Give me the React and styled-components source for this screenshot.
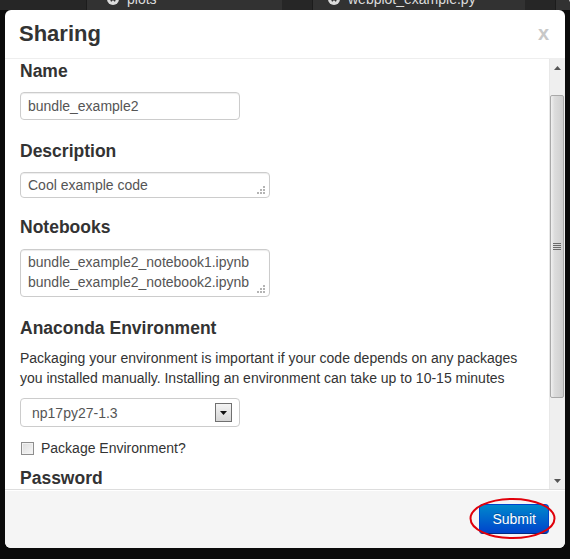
import React from 'react';
import styled, { createGlobalStyle } from 'styled-components';

const GlobalStyle = createGlobalStyle`
  *, *::before, *::after { box-sizing: border-box; }
  html, body { margin: 0; padding: 0; }
  body {
    width: 570px;
    height: 559px;
    overflow: hidden;
    background: #0b0b0b;
    font-family: 'Liberation Sans', Arial, sans-serif;
    color: #333;
  }
`;

const Screen = styled.div`
  width: 570px;
  height: 559px;
  display: flex;
  flex-direction: column;
  background: #0b0b0b;
`;

/* editor tabs peeking out behind the dialog */
const TabStrip = styled.div`
  height: 10px;
  flex-shrink: 0;
  display: flex;
  gap: ${p => p.$gap || 0}px;
  padding-left: 86px;
  background: #262626;
  overflow: hidden;
`;

const Tab = styled.div`
  width: ${p => p.$w}px;
  flex-shrink: 0;
  padding-left: ${p => p.$pad}px;
  background: #323232;
  border-left: 1px solid #1c1c1c;
  color: #dcdcdc;
  font-size: 14px;
  line-height: 20px;
`;

const TabLabel = styled.div`
  display: flex;
  align-items: center;
  gap: 8px;
  margin-top: -11px;
  white-space: nowrap;
`;

const Stage = styled.div`
  display: flex;
  padding-left: 5px;
`;

const Modal = styled.div`
  width: 560px;
  height: 538px;
  display: flex;
  flex-direction: column;
  background: #fff;
  border-radius: 6px;
  overflow: hidden;
`;

const Header = styled.div`
  height: 49px;
  flex-shrink: 0;
  display: flex;
  align-items: center;
  justify-content: space-between;
  padding: 0 16px 0 14px;
  border-bottom: 1px solid #eee;
`;

const Title = styled.h3`
  margin: 0;
  font-size: 22px;
  line-height: 30px;
  font-weight: 700;
  color: #333;
`;

const Close = styled.span`
  font-size: 20px;
  font-weight: 700;
  line-height: 20px;
  color: #c8c8c8;
  margin-top: -2px;
`;

const BodyRow = styled.div`
  height: 430px;
  flex-shrink: 0;
  display: flex;
`;

const Body = styled.div`
  flex: 1;
  overflow: hidden;
  padding: 2px 15px 0;
`;

const Heading = styled.h4`
  margin: ${p => p.$mt || 0}px 0 0;
  font-size: 17.5px;
  line-height: 20px;
  font-weight: 700;
  color: #333;
`;

const TextInput = styled.input`
  display: block;
  margin-top: 11px;
  width: 220px;
  height: 28px;
  padding: 0 7px;
  border: 1px solid #ccc;
  border-radius: 4px;
  box-shadow: inset 0 1px 1px rgba(0, 0, 0, 0.075);
  font-family: 'Liberation Sans', Arial, sans-serif;
  font-size: 14px;
  color: #555;
  outline: none;
`;

const AreaWrap = styled.div`
  position: relative;
  width: 250px;
  margin-top: ${p => p.$mt}px;
`;

const TextArea = styled.textarea`
  display: block;
  width: 250px;
  height: ${p => p.$h}px;
  padding: 2px 7px;
  border: 1px solid #ccc;
  border-radius: 4px;
  box-shadow: inset 0 1px 1px rgba(0, 0, 0, 0.075);
  font-family: 'Liberation Sans', Arial, sans-serif;
  font-size: 14px;
  line-height: 20px;
  color: #555;
  resize: none;
  overflow: hidden;
  white-space: pre;
  outline: none;
`;

const Grip = styled.svg`
  position: absolute;
  right: 5px;
  bottom: 4px;
`;

const Para = styled.p`
  margin: 10px 0 0;
  max-width: 500px;
  font-size: 14px;
  line-height: 20px;
  color: #333;
`;

const SelectBox = styled.div`
  margin-top: 10px;
  width: 220px;
  height: 29px;
  display: flex;
  align-items: center;
  justify-content: space-between;
  padding: 0 7px 0 11px;
  border: 1px solid #ccc;
  border-radius: 4px;
  font-size: 14px;
  color: #555;
`;

const DropBtn = styled.span`
  width: 17px;
  height: 19px;
  display: flex;
  align-items: center;
  justify-content: center;
  border: 1px solid #707070;
  background: linear-gradient(#f4f4f4, #d6d6d6);
`;

const CheckRow = styled.label`
  margin-top: 11px;
  display: flex;
  align-items: center;
  gap: 7px;
  height: 20px;
  padding-left: 1px;
  font-size: 14px;
  line-height: 20px;
  color: #333;
`;

const CheckBox = styled.span`
  width: 13px;
  height: 13px;
  margin-top: 1px;
  border: 1px solid #8e8e8e;
  background: linear-gradient(135deg, #dcdcdc, #f7f7f7);
  box-shadow: inset 0 0 0 1px #f2f2f2;
`;

const ScrollBar = styled.div`
  width: 16px;
  flex-shrink: 0;
  display: flex;
  flex-direction: column;
  background: #efefef;
  border-left: 1px solid #e8e8e8;
`;

const ScrollArrow = styled.div`
  height: 17px;
  display: flex;
  align-items: center;
  justify-content: center;
`;

const ScrollGap = styled.div`
  height: ${p => p.$h}px;
  flex-shrink: 0;
`;

const Thumb = styled.div`
  height: 303px;
  margin: 0 1px 0 0;
  display: flex;
  align-items: center;
  justify-content: center;
  border: 1px solid #a9a9a9;
  border-radius: 2px;
  background: linear-gradient(90deg, #f0f0f0 0%, #dcdcdc 30%, #cfcfcf 100%);
`;

const Footer = styled.div`
  height: 59px;
  flex-shrink: 0;
  display: flex;
  justify-content: flex-end;
  padding: 14px 16px;
  background: #f5f5f5;
  border-top: 1px solid #ddd;
  box-shadow: inset 0 1px 0 #fff;
`;

const Marked = styled.div`
  position: relative;
`;

const Ring = styled.svg`
  position: absolute;
  left: -10px;
  top: -6px;
  pointer-events: none;
`;

const PrimaryBtn = styled.button`
  height: 30px;
  padding: 4px 12px;
  border: 1px solid #0044cc;
  border-bottom-color: #002a80;
  border-radius: 4px;
  background: linear-gradient(#0088cc, #0044cc);
  color: #fff;
  font-family: 'Liberation Sans', Arial, sans-serif;
  font-size: 14px;
  line-height: 20px;
  text-shadow: 0 -1px 0 rgba(0, 0, 0, 0.25);
`;

function CloseCircle() {
  return (
    <svg width="12" height="12" viewBox="0 0 12 12">
      <circle cx="6" cy="6" r="6" fill="#dcdcdc" />
      <path d="M3.8 3.8l4.4 4.4M8.2 3.8l-4.4 4.4" stroke="#323232" strokeWidth="1.6" />
    </svg>
  );
}

function ResizeGrip() {
  const dots = [[6, 0], [3, 3], [6, 3], [0, 6], [3, 6], [6, 6]];
  return (
    <Grip width="8" height="8" viewBox="0 0 8 8">
      {dots.map(([x, y], i) => (
        <rect key={i} x={x} y={y} width="2" height="2" fill="#b4b4b4" />
      ))}
    </Grip>
  );
}

export default function App() {
  return (
    <Screen>
      <GlobalStyle />

      <TabStrip $gap={30}>
        <Tab $w={196} $pad={20}>
          <TabLabel><CloseCircle />plots</TabLabel>
        </Tab>
        <Tab $w={213} $pad={15}>
          <TabLabel><CloseCircle />webplot_example.py</TabLabel>
        </Tab>
        <Tab $w={60} $pad={13}>
          <TabLabel><CloseCircle />main</TabLabel>
        </Tab>
      </TabStrip>

      <Stage>
        <Modal>
          <Header>
            <Title>Sharing</Title>
            <Close>x</Close>
          </Header>

          <BodyRow>
            <Body>
              <Heading>Name</Heading>
              <TextInput value="bundle_example2" readOnly />

              <Heading $mt={21}>Description</Heading>
              <AreaWrap $mt={11}>
                <TextArea $h={26} value="Cool example code" readOnly />
                <ResizeGrip />
              </AreaWrap>

              <Heading $mt={19}>Notebooks</Heading>
              <AreaWrap $mt={12}>
                <TextArea
                  $h={48}
                  value={'bundle_example2_notebook1.ipynb\nbundle_example2_notebook2.ipynb'}
                  readOnly
                />
                <ResizeGrip />
              </AreaWrap>

              <Heading $mt={21}>Anaconda Environment</Heading>
              <Para>
                Packaging your environment is important if your code depends on any packages
                you installed manually. Installing an environment can take up to 10-15 minutes
              </Para>

              <SelectBox>
                <span>np17py27-1.3</span>
                <DropBtn>
                  <svg width="7" height="4" viewBox="0 0 7 4">
                    <path d="M0 0h7L3.5 4z" fill="#111" />
                  </svg>
                </DropBtn>
              </SelectBox>

              <CheckRow>
                <CheckBox />
                Package Environment?
              </CheckRow>

              <Heading $mt={10}>Password</Heading>
            </Body>

            <ScrollBar>
              <ScrollArrow>
                <svg width="7" height="4" viewBox="0 0 7 4">
                  <path d="M0 4h7L3.5 0z" fill="#555" />
                </svg>
              </ScrollArrow>
              <ScrollGap $h={19} />
              <Thumb>
                <svg width="8" height="7" viewBox="0 0 8 7">
                  {[0, 2, 4, 6].map(y => (
                    <rect key={y} x="0" y={y} width="8" height="1" fill="#6a6a6a" />
                  ))}
                </svg>
              </Thumb>
              <ScrollGap $h={74} />
              <ScrollArrow>
                <svg width="7" height="4" viewBox="0 0 7 4">
                  <path d="M0 0h7L3.5 4z" fill="#555" />
                </svg>
              </ScrollArrow>
            </ScrollBar>
          </BodyRow>

          <Footer>
            <Marked>
              <PrimaryBtn>Submit</PrimaryBtn>
              <Ring width="88" height="42" viewBox="0 0 88 42">
                <ellipse cx="43.5" cy="20.5" rx="42" ry="19.5" fill="none" stroke="#e0000a" strokeWidth="2" />
              </Ring>
            </Marked>
          </Footer>
        </Modal>
      </Stage>
    </Screen>
  );
}
